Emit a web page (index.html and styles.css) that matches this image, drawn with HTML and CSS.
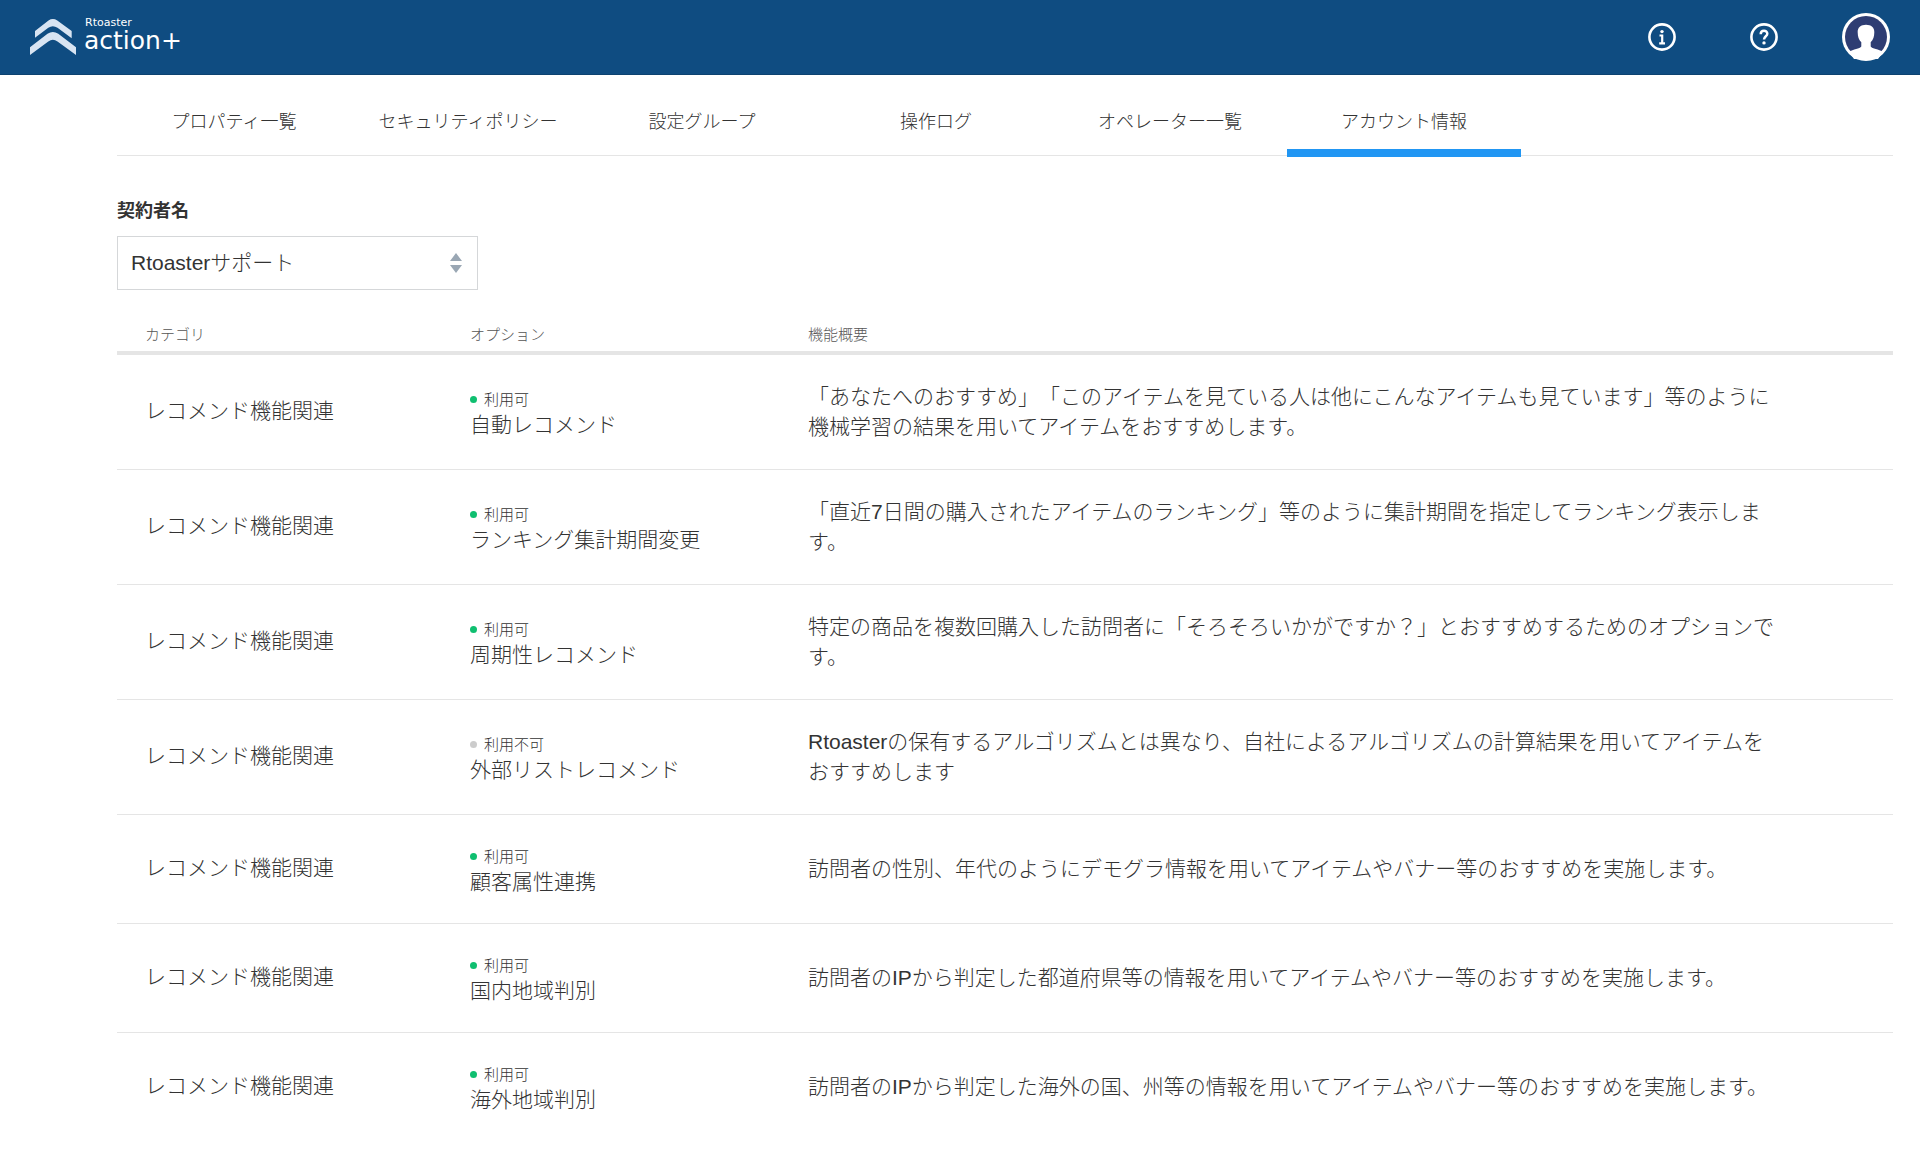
FILE: index.html
```html
<!DOCTYPE html>
<html lang="ja">
<head>
<meta charset="utf-8">
<title>アカウント情報 | Rtoaster action+</title>
<meta name="viewport" content="width=device-width, initial-scale=1">
<link rel="stylesheet" href="styles.css">
</head>
<body>
<header class="header">
  <a class="logo" href="#">
    <svg class="logo-mark" width="46" height="36" viewBox="0 0 46 36" aria-hidden="true">
      <path d="M5 12 18.500 1.500Q22.800 -1.300 27.300 1.500L41.700 12V19.300L27.500 8.800Q22.800 5.600 18.300 8.800L5 18.800Z"/>
      <path d="M0 28.300 17.500 14.800Q22.800 11 28.300 14.800L46 28.300V36L27.500 22.600Q22.800 19 18.300 22.600L0 36Z"/>
    </svg>
    <span class="logo-text"><span class="logo-brand">Rtoaster</span><span class="logo-product">action+</span></span>
  </a>
  <nav class="header-actions" aria-label="ユーザーメニュー">
    <button class="icon-button" type="button" aria-label="お知らせ">
      <svg width="28" height="28" viewBox="0 0 28 28" fill="none" stroke="#fff" aria-hidden="true">
        <circle cx="14" cy="14" r="12.600" stroke-width="2.600"/>
        <circle cx="14" cy="8.600" r="1.700" fill="#fff" stroke="none"/>
        <path d="M11.500 12.500H14.200V20M11.200 20.300H17" stroke-width="2.200"/>
      </svg>
    </button>
    <button class="icon-button" type="button" aria-label="ヘルプ">
      <svg width="28" height="28" viewBox="0 0 28 28" fill="none" stroke="#fff" aria-hidden="true">
        <circle cx="14" cy="14" r="12.600" stroke-width="2.600"/>
        <path d="M10.700 11.200C10.700 6.600 17.300 6.800 17.300 10.700C17.300 13.300 14 13.200 14 16.600" stroke-width="2.500"/>
        <circle cx="14" cy="19.900" r="1.700" fill="#fff" stroke="none"/>
      </svg>
    </button>
    <button class="icon-button" type="button" aria-label="アカウント">
      <svg width="48" height="48" viewBox="0 0 48 48" aria-hidden="true">
        <circle cx="24" cy="24" r="24" fill="#fff"/>
        <circle cx="24" cy="24" r="21" fill="#2e3d73"/>
        <path fill="#fff" d="M24 11.800C29 11.800 32.600 14.500 32.300 19.500C32.200 23.500 31.300 27 28.700 29.300V33.500C30 36 37 36 41 39L36 46H12L7 39C11 36 18 36 19.300 33.500V29.300C16.700 27 15.800 23.500 15.700 19.500C15.400 14.500 19 11.800 24 11.800Z"/>
      </svg>
    </button>
  </nav>
</header>
<main class="main">
  <nav class="tabs" aria-label="設定">
    <a class="tab" href="#">プロパティ一覧</a>
    <a class="tab" href="#">セキュリティポリシー</a>
    <a class="tab" href="#">設定グループ</a>
    <a class="tab" href="#">操作ログ</a>
    <a class="tab" href="#">オペレーター一覧</a>
    <a class="tab tab-active" href="#" aria-current="page">アカウント情報</a>
  </nav>
  <div class="field">
    <label class="field-label" for="contractor">契約者名</label>
    <div class="select-box">
      <select class="select" id="contractor"><option>Rtoasterサポート</option></select>
      <svg class="select-arrows" width="12" height="20" viewBox="0 0 12 20" aria-hidden="true"><path d="M6 0 12 8H0ZM6 20 0 12H12Z"/></svg>
    </div>
  </div>
  <table class="options">
    <thead>
      <tr><th class="col-category" scope="col">カテゴリ</th><th class="col-option" scope="col">オプション</th><th class="col-summary" scope="col">機能概要</th></tr>
    </thead>
    <tbody>
      <tr class="tall"><td class="category">レコメンド機能関連</td><td class="option"><div class="status">利用可</div><div class="name">自動レコメンド</div></td><td>「あなたへのおすすめ」「このアイテムを見ている人は他にこんなアイテムも見ています」等のように機械学習の結果を用いてアイテムをおすすめします。</td></tr>
      <tr class="tall"><td class="category">レコメンド機能関連</td><td class="option"><div class="status">利用可</div><div class="name">ランキング集計期間変更</div></td><td>「直近7日間の購入されたアイテムのランキング」等のように集計期間を指定してランキング表示します。</td></tr>
      <tr class="tall"><td class="category">レコメンド機能関連</td><td class="option"><div class="status">利用可</div><div class="name">周期性レコメンド</div></td><td>特定の商品を複数回購入した訪問者に「そろそろいかがですか？」とおすすめするためのオプションです。</td></tr>
      <tr class="tall"><td class="category">レコメンド機能関連</td><td class="option"><div class="status status-off">利用不可</div><div class="name">外部リストレコメンド</div></td><td>Rtoasterの保有するアルゴリズムとは異なり、自社によるアルゴリズムの計算結果を用いてアイテムをおすすめします</td></tr>
      <tr><td class="category">レコメンド機能関連</td><td class="option"><div class="status">利用可</div><div class="name">顧客属性連携</div></td><td>訪問者の性別、年代のようにデモグラ情報を用いてアイテムやバナー等のおすすめを実施します。</td></tr>
      <tr><td class="category">レコメンド機能関連</td><td class="option"><div class="status">利用可</div><div class="name">国内地域判別</div></td><td>訪問者のIPから判定した都道府県等の情報を用いてアイテムやバナー等のおすすめを実施します。</td></tr>
      <tr><td class="category">レコメンド機能関連</td><td class="option"><div class="status">利用可</div><div class="name">海外地域判別</div></td><td>訪問者のIPから判定した海外の国、州等の情報を用いてアイテムやバナー等のおすすめを実施します。</td></tr>
    </tbody>
  </table>
</main>
</body>
</html>
```
FILE: styles.css
```css
* { box-sizing: border-box; }

body {
  margin: 0;
  background: #fff;
  color: #333;
  font-family: "Liberation Sans", "Noto Sans CJK JP", sans-serif;
  font-size: 21px;
  font-weight: 300;
  line-height: 30px;
  text-spacing-trim: space-all;
}

.header {
  display: flex;
  justify-content: space-between;
  align-items: center;
  height: 75px;
  padding: 0 30px;
  background: #0f4c81;
  border-bottom: 1px solid #0d4270;
}

.logo {
  display: flex;
  align-items: center;
  gap: 8px;
  color: #fff;
  text-decoration: none;
  font-family: "DejaVu Sans", sans-serif;
  font-weight: 400;
}

.logo-mark { fill: #d8e4f2; }
.logo-text { display: flex; flex-direction: column; padding-bottom: 4px; }
.logo-brand { padding-left: 1px; font-size: 11px; line-height: 12px; }
.logo-product { font-size: 25px; line-height: 24px; }

.header-actions { display: flex; align-items: center; gap: 74px; }
.icon-button {
  display: flex;
  padding: 0;
  border: 0;
  background: none;
  cursor: pointer;
}
.icon-button:last-child { margin-left: -10px; }

.main { padding: 0 27px 0 117px; }

.tabs {
  display: flex;
  height: 81px;
  border-bottom: 1px solid #e5e5e5;
}

.tab {
  flex: 0 1 234px;
  height: 82px;
  padding-top: 32px;
  border-bottom: 8px solid transparent;
  color: #333;
  font-size: 18px;
  text-align: center;
  text-decoration: none;
  white-space: nowrap;
}
.tab-active { border-bottom-color: #2196f3; }

.field { padding-top: 40px; }
.field-label {
  display: block;
  margin-bottom: 10px;
  font-size: 18px;
  font-weight: 700;
}

.select-box { position: relative; width: 361px; max-width: 100%; }
.select {
  display: block;
  width: 100%;
  height: 54px;
  padding: 0 40px 0 13px;
  border: 1px solid #d5d7d9;
  border-radius: 0;
  appearance: none;
  background: #fff;
  color: #333;
  font: inherit;
}
.select-arrows {
  position: absolute;
  top: 17px;
  right: 16px;
  fill: #9aa7b4;
  pointer-events: none;
}

.options {
  width: 100%;
  margin-top: 28px;
  border-collapse: separate;
  border-spacing: 0;
  table-layout: fixed;
}
.col-category { width: 325px; }
.col-option { width: 338px; }

.options th {
  height: 37px;
  padding: 0 28px;
  border-bottom: 4px solid #e5e5e5;
  color: #555;
  font-size: 15px;
  font-weight: 300;
  text-align: left;
}
.options td {
  height: 109px;
  padding: 0 28px;
  border-bottom: 1px solid #e5e5e5;
  vertical-align: middle;
}
.options .tall td { height: 115px; }
.options tbody tr:last-child td { border-bottom-color: transparent; }
.options td:last-child { padding-right: 115px; }
.options .category { padding-bottom: 2px; }
.options .option { padding-top: 1px; }

.status {
  display: flex;
  align-items: center;
  gap: 7px;
  font-size: 15px;
  line-height: 24px;
}
.status::before {
  content: "";
  width: 7px;
  height: 7px;
  border-radius: 50%;
  background: #0fbf70;
}
.status-off::before { background: #ccc; }
.name { line-height: 26px; }
```
